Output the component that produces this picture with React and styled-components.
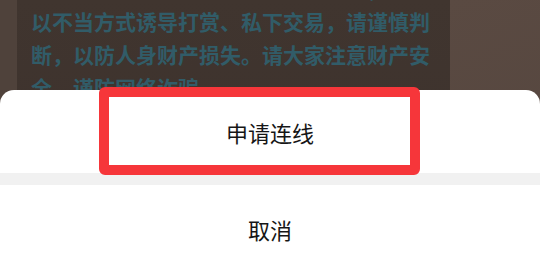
import React from "react";
import styled, { createGlobalStyle } from "styled-components";

const GlobalStyle = createGlobalStyle`
  html, body {
    margin: 0;
    padding: 0;
    background: #4a3d36;
    font-family: "Noto Sans CJK SC", "Noto Sans", sans-serif;
  }
`;

// whole viewport
const Stage = styled.div`
  position: relative;
  width: 540px;
  height: 268px;
  overflow: hidden;
`;

// live room backdrop behind the sheet
const Backdrop = styled.div`
  display: flex;
  height: 100%;
`;

const Edge = styled.div`
  width: ${(p) => p.$w || "auto"};
  flex: ${(p) => (p.$grow ? 1 : "none")};
  background: ${(p) => p.$bg};
`;

const NoticePanel = styled.div`
  width: 433px;
  padding-left: 14px;
  box-sizing: border-box;
  background: linear-gradient(180deg, #40352f 0%, #3c312c 100%);
`;

const NoticeText = styled.p`
  margin: -28px 0 0;
  width: 400px;
  font-size: 21px;
  line-height: 33px;
  font-weight: 700;
  color: #315c68;
  letter-spacing: 0;
`;

// bottom action sheet
const Sheet = styled.div`
  position: absolute;
  left: 0;
  right: 0;
  top: 90px;
  bottom: 0;
  background: #ffffff;
  border-radius: 14px 14px 0 0;
  display: flex;
  flex-direction: column;
`;

const Action = styled.div`
  height: ${(p) => p.$h}px;
  display: flex;
  align-items: center;
  justify-content: center;
  font-size: 22px;
  color: #161616;
  flex: none;
`;

const Divider = styled.div`
  height: 12px;
  background: #f1f1f1;
  flex: none;
`;

// red annotation frame drawn over the first action
const Highlight = styled.div`
  position: absolute;
  left: 99px;
  top: -3px;
  width: 321px;
  height: 88px;
  box-sizing: border-box;
  border: 10px solid #f6363a;
  border-radius: 6px;
  pointer-events: none;
`;

export default function App() {
  return (
    <>
      <GlobalStyle />
      <Stage>
        <Backdrop>
          <Edge $w="17px" $bg="#4f423b" />
          <NoticePanel>
            <NoticeText>
              直播间内如遇主播或他人以交友名义，或
              以不当方式诱导打赏、私下交易，请谨慎判断，以防人身财产损失。请大家注意财产安全，谨防网络诈骗。
            </NoticeText>
          </NoticePanel>
          <Edge $grow $bg="linear-gradient(160deg, #5a4a42 0%, #54453e 100%)" />
        </Backdrop>
        <Sheet>
          <Action $h={83}>申请连线</Action>
          <Divider />
          <Action $h={88}>取消</Action>
          <Highlight />
        </Sheet>
      </Stage>
    </>
  );
}
